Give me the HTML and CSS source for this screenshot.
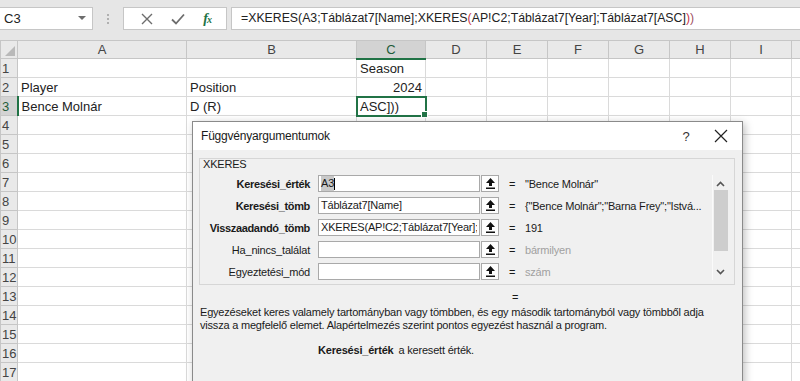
FILE: index.html
```html
<!DOCTYPE html>
<html lang="hu">
<head>
  <meta charset="UTF-8">
  <title>XKERES – Függvényargumentumok</title>
  <link rel="stylesheet" href="styles.css">
</head>
<body>
<div class="page">

  <div class="toolbar">
    <div class="namebox">
      <span>C3</span>
      <svg width="8" height="5" viewBox="0 0 8 5"><path d="M0 0h8L4 4z" fill="#6d6d6d"/></svg>
    </div>
    <div class="grip"><i></i><i></i><i></i></div>
    <div class="fxbtns">
      <svg width="12" height="12" viewBox="0 0 12 12"><path d="M1 1l10 10M11 1L1 11" stroke="#6d6d6d" stroke-width="1.4"/></svg>
      <svg width="14" height="12" viewBox="0 0 14 12"><path d="M1 6.5l4 4L13 1.5" stroke="#6d6d6d" stroke-width="1.8" fill="none"/></svg>
      <span class="fx">f<small>x</small></span>
    </div>
    <div class="formula">=XKERES(A3;Táblázat7[Name];XKERES<span class="p1">(</span>AP!C2;Táblázat7[Year];Táblázat7[ASC]<span class="p1">)</span><span class="p2">)</span></div>
  </div>

  <table class="grid">
    <colgroup>
      <col class="c-hdr"><col class="c-a"><col class="c-b"><col class="c-c">
      <col class="c-n"><col class="c-n"><col class="c-n"><col class="c-n"><col class="c-n"><col class="c-n"><col class="c-n">
    </colgroup>
    <tr class="colhdr">
      <th class="corner"></th><th>A</th><th>B</th><th class="sel">C</th><th>D</th><th>E</th><th>F</th><th>G</th><th>H</th><th>I</th><th></th>
    </tr>
    <tr><th>1</th><td></td><td></td><td>Season</td><td></td><td></td><td></td><td></td><td></td><td></td><td></td></tr>
    <tr><th>2</th><td>Player</td><td>Position</td><td class="num">2024</td><td></td><td></td><td></td><td></td><td></td><td></td><td></td></tr>
    <tr><th class="sel">3</th><td>Bence Molnár</td><td>D (R)</td><td class="active">ASC]))</td><td></td><td></td><td></td><td></td><td></td><td></td><td></td></tr>
    <tr><th>4</th><td></td><td></td><td></td><td></td><td></td><td></td><td></td><td></td><td></td><td></td></tr>
    <tr><th>5</th><td></td><td></td><td></td><td></td><td></td><td></td><td></td><td></td><td></td><td></td></tr>
    <tr><th>6</th><td></td><td></td><td></td><td></td><td></td><td></td><td></td><td></td><td></td><td></td></tr>
    <tr><th>7</th><td></td><td></td><td></td><td></td><td></td><td></td><td></td><td></td><td></td><td></td></tr>
    <tr><th>8</th><td></td><td></td><td></td><td></td><td></td><td></td><td></td><td></td><td></td><td></td></tr>
    <tr><th>9</th><td></td><td></td><td></td><td></td><td></td><td></td><td></td><td></td><td></td><td></td></tr>
    <tr><th>10</th><td></td><td></td><td></td><td></td><td></td><td></td><td></td><td></td><td></td><td></td></tr>
    <tr><th>11</th><td></td><td></td><td></td><td></td><td></td><td></td><td></td><td></td><td></td><td></td></tr>
    <tr><th>12</th><td></td><td></td><td></td><td></td><td></td><td></td><td></td><td></td><td></td><td></td></tr>
    <tr><th>13</th><td></td><td></td><td></td><td></td><td></td><td></td><td></td><td></td><td></td><td></td></tr>
    <tr><th>14</th><td></td><td></td><td></td><td></td><td></td><td></td><td></td><td></td><td></td><td></td></tr>
    <tr><th>15</th><td></td><td></td><td></td><td></td><td></td><td></td><td></td><td></td><td></td><td></td></tr>
    <tr><th>16</th><td></td><td></td><td></td><td></td><td></td><td></td><td></td><td></td><td></td><td></td></tr>
    <tr><th>17</th><td></td><td></td><td></td><td></td><td></td><td></td><td></td><td></td><td></td><td></td></tr>
  </table>

  <div class="dialog">
    <div class="dlg-title">
      <span class="dlg-name">Függvényargumentumok</span>
      <span class="help">?</span>
      <svg class="close" width="14" height="14" viewBox="0 0 14 14"><path d="M1 1l12 12M13 1L1 13" stroke="#222" stroke-width="1.2"/></svg>
    </div>
    <div class="dlg-body">
      <div class="group">
        <div class="group-name">XKERES</div>
        <div class="args">
          <div class="arg-list">
            <div class="arg">
              <span class="label req">Keresési_érték</span>
              <span class="input"><span class="sel-text">A3</span><span class="caret"></span></span>
              <span class="ref"><svg width="9" height="11" viewBox="0 0 9 11"><path d="M4.5 0L0 5h3v3h3V5h3z M0 9.5h9v1.5H0z" fill="#111"/></svg></span>
              <span class="eq">=</span>
              <span class="val">"Bence Molnár"</span>
            </div>
            <div class="arg">
              <span class="label req">Keresési_tömb</span>
              <span class="input">Táblázat7[Name]</span>
              <span class="ref"><svg width="9" height="11" viewBox="0 0 9 11"><path d="M4.5 0L0 5h3v3h3V5h3z M0 9.5h9v1.5H0z" fill="#111"/></svg></span>
              <span class="eq">=</span>
              <span class="val">{"Bence Molnár";"Barna Frey";"Istvá...</span>
            </div>
            <div class="arg">
              <span class="label req">Visszaadandó_tömb</span>
              <span class="input"><span class="clip">XKERES(AP!C2;Táblázat7[Year];Táblázat7[ASC])</span></span>
              <span class="ref"><svg width="9" height="11" viewBox="0 0 9 11"><path d="M4.5 0L0 5h3v3h3V5h3z M0 9.5h9v1.5H0z" fill="#111"/></svg></span>
              <span class="eq">=</span>
              <span class="val">191</span>
            </div>
            <div class="arg">
              <span class="label">Ha_nincs_találat</span>
              <span class="input"></span>
              <span class="ref"><svg width="9" height="11" viewBox="0 0 9 11"><path d="M4.5 0L0 5h3v3h3V5h3z M0 9.5h9v1.5H0z" fill="#111"/></svg></span>
              <span class="eq">=</span>
              <span class="val muted">bármilyen</span>
            </div>
            <div class="arg">
              <span class="label">Egyeztetési_mód</span>
              <span class="input"></span>
              <span class="ref"><svg width="9" height="11" viewBox="0 0 9 11"><path d="M4.5 0L0 5h3v3h3V5h3z M0 9.5h9v1.5H0z" fill="#111"/></svg></span>
              <span class="eq">=</span>
              <span class="val muted">szám</span>
            </div>
          </div>
          <div class="vscroll">
            <svg width="9" height="6" viewBox="0 0 9 6"><path d="M1 5l3.5-3.5L8 5" stroke="#555" stroke-width="1.6" fill="none"/></svg>
            <div class="thumb"></div>
            <svg class="down" width="9" height="6" viewBox="0 0 9 6"><path d="M1 1l3.5 3.5L8 1" stroke="#555" stroke-width="1.6" fill="none"/></svg>
          </div>
        </div>
      </div>
      <div class="result">=</div>
      <p class="desc">Egyezéseket keres valamely tartományban vagy tömbben, és egy második tartományból vagy tömbből adja vissza a megfelelő elemet. Alapértelmezés szerint pontos egyezést használ a program.</p>
      <div class="argdesc"><b>Keresési_érték</b><span>a keresett érték.</span></div>
    </div>
  </div>

</div>
</body>
</html>
```

FILE: styles.css
```css
* {
  box-sizing: border-box;
}
body {
  margin: 0;
  background: #fff;
  font-family: "Liberation Sans", Arial, sans-serif;
  color: #222;
  overflow: hidden;
}
.page {
  position: relative;
  width: 800px;
  height: 381px;
  overflow: hidden;
}

/* formula bar */
.toolbar {
  height: 40px;
  background: #e6e6e6;
  display: flex;
  align-items: flex-start;
  padding-top: 7px;
}
.namebox {
  width: 93px;
  height: 23px;
  background: #fff;
  border: 1px solid #c6c6c6;
  border-left: none;
  display: flex;
  align-items: center;
  justify-content: space-between;
  padding: 0 6px 0 4px;
  font-size: 13px;
}
.grip {
  width: 30px;
  height: 23px;
  display: flex;
  flex-direction: column;
  align-items: center;
  justify-content: center;
  gap: 2px;
}
.grip i {
  width: 2px;
  height: 2px;
  background: #b0b0b0;
}
.fxbtns {
  width: 104px;
  height: 23px;
  background: #fff;
  border: 1px solid #c6c6c6;
  display: flex;
  align-items: center;
  justify-content: space-around;
  padding: 0 6px 0 8px;
}
.fx {
  color: #217346;
  font-family: "Liberation Serif", serif;
  font-style: italic;
  font-weight: bold;
  font-size: 14px;
  letter-spacing: -1px;
}
.fx small {
  font-size: 10px;
}
.formula {
  flex: 1;
  margin-left: 4px;
  height: 23px;
  background: #fff;
  border: 1px solid #c6c6c6;
  border-right: none;
  padding: 0 0 0 9px;
  font-size: 12.3px;
  line-height: 21px;
  white-space: nowrap;
}
.p1 {
  color: #c8374a;
}
.p2 {
  color: #a05062;
}

/* grid */
.grid {
  border-collapse: collapse;
  table-layout: fixed;
  width: 851px;
  font-size: 13px;
}
.c-hdr { width: 17px; }
.c-a { width: 169px; }
.c-b { width: 170px; }
.c-c { width: 69px; }
.c-n { width: 61px; }
.grid tr {
  height: 19px;
}
.grid tr.colhdr {
  height: 18px;
}
.grid td {
  border: 1px solid #dadada;
  padding: 0 3px;
  white-space: nowrap;
  overflow: visible;
}
.grid th {
  background: #e9e9e9;
  border: 1px solid #c6c6c6;
  font-weight: normal;
  color: #444;
  padding: 0;
  font-size: 13px;
}
.grid tr:not(.colhdr) th {
  text-align: left;
  padding-left: 1px;
}
.grid th.sel {
  background: #d3d3d3;
  color: #1e5c39;
}
.colhdr th.sel {
  border-bottom: 2px solid #217346;
}
tr th.sel:first-child {
  border-right: 2px solid #217346;
}
.corner {
  position: relative;
}
.corner::after {
  content: "";
  position: absolute;
  right: 2px;
  bottom: 2px;
  border-left: 10px solid transparent;
  border-bottom: 10px solid #b9b9b9;
}
.grid td.num {
  text-align: right;
}
.grid td.active {
  position: relative;
  outline: 2px solid #217346;
  outline-offset: -1px;
}
.active::after {
  content: "";
  position: absolute;
  right: -3px;
  bottom: -3px;
  width: 5px;
  height: 5px;
  background: #217346;
  border: 1px solid #fff;
}

/* dialog */
.dialog {
  position: absolute;
  left: 192px;
  top: 121px;
  width: 551px;
  height: 280px;
  background: #f0f0f0;
  border: 1px solid #8a8a8a;
  box-shadow: 2px 2px 8px rgba(0, 0, 0, 0.25);
  font-size: 11px;
  letter-spacing: -0.2px;
  color: #1a1a1a;
}
.dlg-title {
  height: 28px;
  background: #fff;
  display: flex;
  align-items: center;
  padding: 0 0 0 8px;
  font-size: 12px;
  letter-spacing: -0.2px;
}
.dlg-name {
  flex: 1;
}
.help {
  width: 44px;
  text-align: center;
  font-size: 13px;
  color: #333;
}
.close {
  margin: 0 14px 0 6px;
}
.dlg-body {
  padding: 8px 6px 0 6px;
}
.group {
  width: 536px;
  height: 127px;
  border: 1px solid #d6d6d6;
  padding: 0 6px 0 0;
}
.group-name {
  line-height: 12px;
  padding: 0 0 0 3px;
  margin-top: -1px;
  height: 17px;
}
.args {
  display: flex;
}
.arg-list {
  flex: 1;
  display: flex;
  flex-direction: column;
  gap: 5px;
}
.arg {
  display: flex;
  align-items: center;
  height: 17px;
}
.label {
  width: 110px;
  text-align: right;
  margin-right: 8px;
  white-space: nowrap;
}
.label.req {
  font-weight: bold;
  letter-spacing: -0.35px;
}
.input {
  width: 162px;
  height: 17px;
  background: #fff;
  border: 1px solid #a9a9a9;
  padding: 0 2px;
  line-height: 15px;
  white-space: nowrap;
  overflow: hidden;
  display: flex;
  align-items: center;
}
.clip {
  display: block;
  width: 156px;
  overflow: hidden;
}
.sel-text {
  background: #c9c9c9;
}
.caret {
  width: 1px;
  height: 12px;
  background: #000;
}
.ref {
  width: 18px;
  height: 17px;
  margin-left: 1px;
  border: 1px solid #a9a9a9;
  background: #fdfdfd;
  display: flex;
  align-items: center;
  justify-content: center;
}
.eq {
  width: 26px;
  text-align: center;
}
.val {
  white-space: nowrap;
}
.val.muted {
  color: #a0a0a0;
}
.vscroll {
  width: 16px;
  height: 105px;
  border-left: 1px solid #fafafa;
  display: flex;
  flex-direction: column;
  align-items: center;
  padding-top: 6px;
}
.thumb {
  width: 14px;
  height: 61px;
  margin: 3px 0 0 1px;
  background: #cdcdcd;
}
.vscroll .down {
  margin-top: 18px;
}
.result {
  margin: 6px 0 0 313px;
  line-height: 12px;
}
.desc {
  margin: 3px 0 0 1px;
  width: 530px;
  line-height: 13px;
}
.argdesc {
  margin: 12px 0 0 119px;
}
.argdesc span {
  margin-left: 5px;
}
```
